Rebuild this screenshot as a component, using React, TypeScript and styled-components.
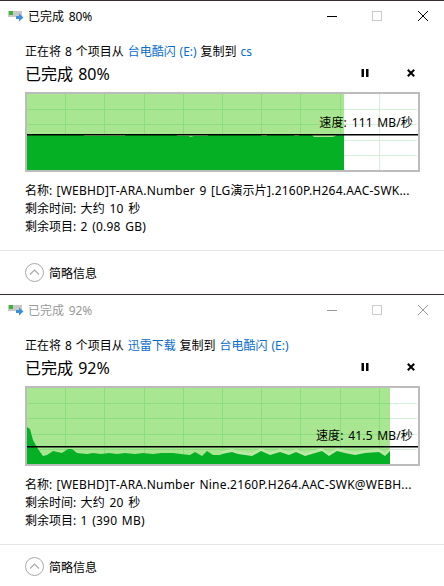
import styled, { createGlobalStyle } from "styled-components";

const GlobalStyle = createGlobalStyle`
  html, body {
    margin: 0;
    padding: 0;
    background: #fff;
    overflow: hidden;
  }
  body {
    font-family: "Noto Sans", "Noto Sans CJK SC", sans-serif;
    font-size: 12px;
    color: #000;
  }
`;

const Window = styled.div`
  height: 294px;
  box-sizing: border-box;
  display: flex;
  flex-direction: column;
  background: #fff;
  border-top: 1px solid #3a2d30;
`;

const TitleBar = styled.div`
  height: 29px;
  display: flex;
  align-items: center;
  padding-left: 8px;
  margin-right: -1.5px;
`;

const TitleText = styled.span<{ $inactive?: boolean }>`
  margin-left: 4px;
  flex: 1;
  word-spacing: 1.5px;
  color: ${(p) => (p.$inactive ? "#999" : "#000")};
`;

const CaptionButton = styled.div`
  width: 45.5px;
  height: 29px;
  display: flex;
  align-items: center;
  justify-content: center;
`;

const Intro = styled.div`
  margin: 13px 0 0 25px;
  height: 18px;
  line-height: 18px;
  word-spacing: 0.8px;
`;

const Link = styled.span`
  color: #0a6ccf;
`;

const ProgressRow = styled.div`
  height: 24px;
  margin-left: 25px;
  padding-right: 10px;
  display: flex;
  align-items: center;
`;

const ProgressTitle = styled.div`
  flex: 1;
  font-size: 16px;
  word-spacing: 1px;
`;

const ProgressButton = styled.div`
  width: 46px;
  display: flex;
  justify-content: center;
`;

const Graph = styled.div`
  position: relative;
  width: 391px;
  height: 76px;
  margin: 7px 0 0 25px;
  border: 2px solid #bcbcbc;
  background: #fff;

  svg {
    display: block;
  }
`;

const Speed = styled.div<{ $top: number }>`
  position: absolute;
  right: 5px;
  top: ${(p) => p.$top}px;
  line-height: 18px;
  word-spacing: 1.5px;
  letter-spacing: 0.12px;
`;

const Details = styled.div`
  margin: 10px 0 0 25px;
`;

const DetailRow = styled.div`
  height: 18px;
  line-height: 18px;
  white-space: nowrap;
  word-spacing: 1.2px;
`;

const DetailValue = styled.span`
  letter-spacing: 0.22px;
`;

const Divider = styled.div`
  height: 1px;
  margin-top: 14px;
  background: #e5e5e5;
`;

const Footer = styled.div`
  height: 43px;
  display: flex;
  align-items: center;
  gap: 5px;
  padding-left: 25px;
`;

const CopyIcon = () => (
  <svg width="16" height="12" viewBox="0 0 16 12">
    <rect x="0" y="1" width="14" height="6" fill="#c8c8c8" />
    <rect x="1" y="1" width="4" height="4" fill="#3cb43c" />
    <path d="M8 6h3V3.5L15.5 7.5 11 11.5V9H8z" fill="#3c8fdc" />
  </svg>
);

const MinimizeIcon = ({ color }: { color: string }) => (
  <svg width="10" height="10" viewBox="0 0 10 10">
    <path d="M0 5.5h10" stroke={color} strokeWidth="1" />
  </svg>
);

const MaximizeIcon = () => (
  <svg width="10" height="10" viewBox="0 0 10 10">
    <rect x="0.5" y="0.5" width="9" height="9" fill="none" stroke="#ccc" />
  </svg>
);

const CloseIcon = ({ color }: { color: string }) => (
  <svg width="10" height="10" viewBox="0 0 10 10">
    <path d="M0 0l10 10M10 0L0 10" stroke={color} strokeWidth="1" />
  </svg>
);

const PauseIcon = () => (
  <svg width="8" height="8" viewBox="0 0 8 8">
    <path d="M0.5 0h2.5v8H0.5zM5 0h2.5v8H5z" fill="#000" />
  </svg>
);

const CancelIcon = () => (
  <svg width="8" height="8" viewBox="0 0 8 8">
    <path d="M0.8 0.8l6.4 6.4M7.2 0.8L0.8 7.2" stroke="#000" strokeWidth="2" />
  </svg>
);

const CollapseIcon = () => (
  <svg width="19" height="19" viewBox="0 0 19 19">
    <circle cx="9.5" cy="9.5" r="9" fill="#fff" stroke="#a9a9a9" />
    <path d="M5 11.5l4.5-4.5 4.5 4.5" fill="none" stroke="#a9a9a9" strokeWidth="1.2" />
  </svg>
);

const GRID_X = [38, 77, 117, 156, 195, 234, 273, 313, 352];
const GRID_Y = [15, 30, 46, 61];

type ChartProps = {
  fillWidth: number;
  lineY: number;
  area: number[][];
  band?: number[][];
};

const toPoints = (pts: number[][], width: number) =>
  [[0, 76], ...pts, [width, 76]].map((p) => p.join(",")).join(" ");

const Chart = ({ fillWidth, lineY, area, band }: ChartProps) => {
  const lines = (color: string, maxX: number, minX: number) => (
    <>
      {GRID_X.filter((x) => x < maxX && x >= minX).map((x) => (
        <rect key={x} x={x} y={0} width={1} height={76} fill={color} />
      ))}
      {GRID_Y.map((y) => (
        <rect key={y} x={minX} y={y} width={Math.min(maxX, 390) - minX} height={1} fill={color} />
      ))}
    </>
  );

  return (
    <svg width="391" height="76" viewBox="0 0 391 76">
      {lines("#d3f1d6", 391, fillWidth)}
      <rect x={0} y={0} width={fillWidth} height={76} fill="#a9e691" />
      {lines("#8ade7b", fillWidth, 0)}
      {band && <polygon points={toPoints(band, fillWidth)} fill="#bbe9a6" />}
      <polygon points={toPoints(area, fillWidth)} fill="#06b025" />
      <rect x={0} y={lineY} width={391} height={1.5} fill="#000" />
    </svg>
  );
};

const FIRST_AREA = [
  [0, 41], [57, 41], [57, 42], [98, 42], [98, 41], [150, 41], [150, 42], [162, 42], [163, 43], [167, 42],
  [181, 42], [181, 41], [234, 41], [234, 42], [240, 42], [240, 41], [267, 41], [267, 42], [272, 42],
  [272, 41], [285, 41], [287, 43], [306, 43], [310, 41], [317, 41],
];

const SECOND_AREA = [
  [0, 39], [3, 41], [6, 52], [11, 61], [16, 68], [20, 67], [26, 63], [35, 65], [41, 61], [45, 61], [50, 65],
  [60, 66], [66, 65], [74, 66], [82, 65], [90, 66], [98, 65], [108, 66], [116, 65], [126, 66], [134, 65],
  [146, 65], [154, 66], [163, 67], [168, 64], [175, 68], [180, 63], [186, 67], [193, 67], [195, 66], [205, 64],
  [211, 66], [225, 68], [234, 63], [243, 67], [253, 64], [262, 67], [269, 64], [278, 68], [295, 63], [302, 68],
  [310, 63], [318, 65], [328, 67], [338, 65], [352, 64], [358, 68], [363, 63],
];

const SECOND_BAND = SECOND_AREA.map(([x, y]) => [x, x < 195 ? y : y - 3]);

type TransferProps = {
  inactive?: boolean;
  percent: number;
  from: string;
  to: string;
  name: string;
  time: string;
  left: string;
  speed: string;
  speedTop: number;
  fillWidth: number;
  lineY: number;
  area: number[][];
  band?: number[][];
};

const TransferWindow = (props: TransferProps) => {
  const caption = props.inactive ? "#999" : "#000";
  return (
    <Window>
      <TitleBar>
        <CopyIcon />
        <TitleText $inactive={props.inactive}>已完成 {props.percent}%</TitleText>
        <CaptionButton>
          <MinimizeIcon color={caption} />
        </CaptionButton>
        <CaptionButton>
          <MaximizeIcon />
        </CaptionButton>
        <CaptionButton>
          <CloseIcon color={caption} />
        </CaptionButton>
      </TitleBar>
      <Intro>
        正在将 8 个项目从 <Link>{props.from}</Link> 复制到 <Link>{props.to}</Link>
      </Intro>
      <ProgressRow>
        <ProgressTitle>已完成 {props.percent}%</ProgressTitle>
        <ProgressButton>
          <PauseIcon />
        </ProgressButton>
        <ProgressButton>
          <CancelIcon />
        </ProgressButton>
      </ProgressRow>
      <Graph>
        <Chart fillWidth={props.fillWidth} lineY={props.lineY} area={props.area} band={props.band} />
        <Speed $top={props.speedTop}>速度: {props.speed}</Speed>
      </Graph>
      <Details>
        <DetailRow>
          名称: <DetailValue>{props.name}</DetailValue>
        </DetailRow>
        <DetailRow>
          剩余时间: <DetailValue>{props.time}</DetailValue>
        </DetailRow>
        <DetailRow>
          剩余项目: <DetailValue>{props.left}</DetailValue>
        </DetailRow>
      </Details>
      <Divider />
      <Footer>
        <CollapseIcon />
        <span>简略信息</span>
      </Footer>
    </Window>
  );
};

export default function App() {
  return (
    <>
      <GlobalStyle />
      <TransferWindow
        percent={80}
        from="台电酷闪 (E:)"
        to="cs"
        name="[WEBHD]T-ARA.Number 9 [LG演示片].2160P.H264.AAC-SWK..."
        time="大约 10 秒"
        left="2 (0.98 GB)"
        speed="111 MB/秒"
        speedTop={20}
        fillWidth={317}
        lineY={40}
        area={FIRST_AREA}
      />
      <TransferWindow
        inactive
        percent={92}
        from="迅雷下载"
        to="台电酷闪 (E:)"
        name="[WEBHD]T-ARA.Number Nine.2160P.H264.AAC-SWK@WEBH..."
        time="大约 20 秒"
        left="1 (390 MB)"
        speed="41.5 MB/秒"
        speedTop={39}
        fillWidth={363}
        lineY={58}
        area={SECOND_AREA}
        band={SECOND_BAND}
      />
    </>
  );
}
